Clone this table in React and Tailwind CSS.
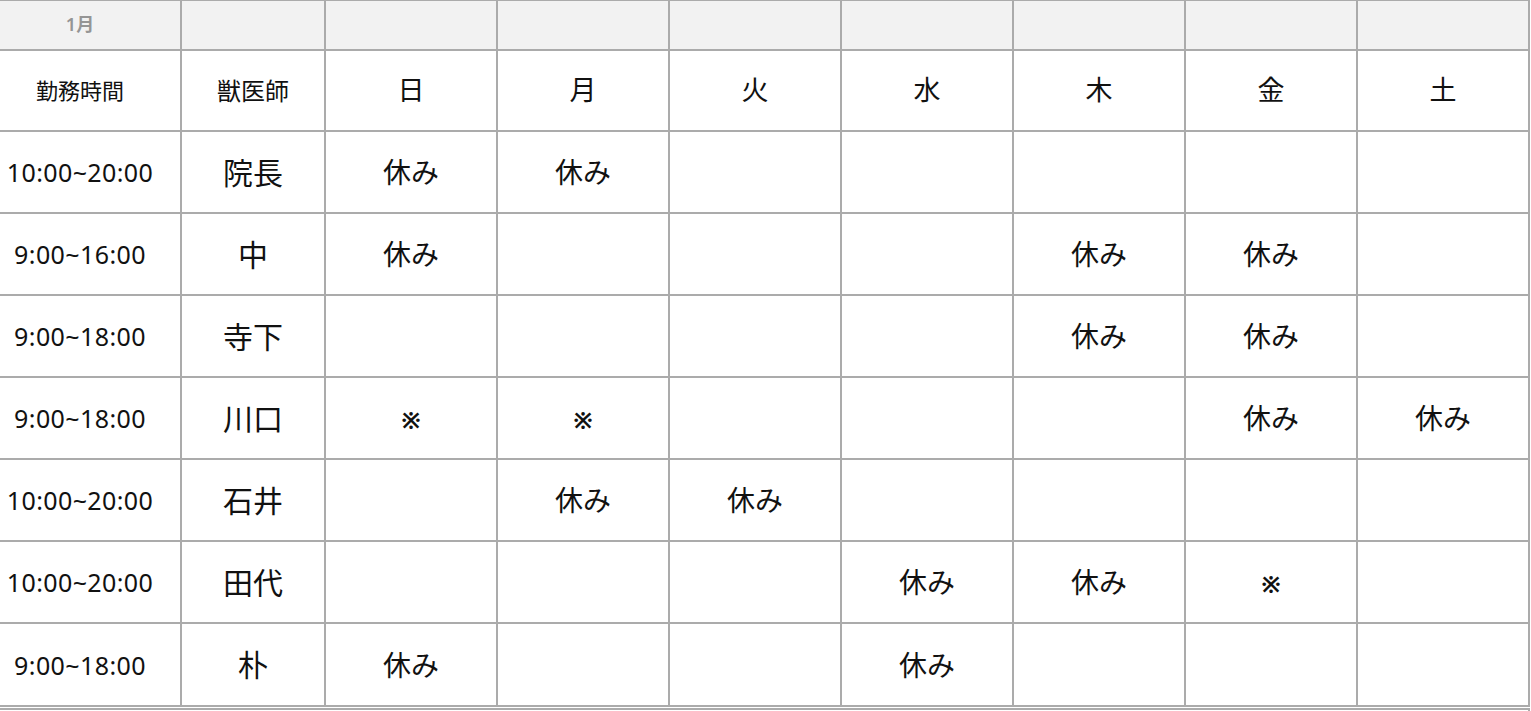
import React from 'react';

const days = ['日', '月', '火', '水', '木', '金', '土'];

// 勤務表: 各行 [勤務時間, 獣医師, 日..土]
const rows = [
    ['10:00~20:00', '院長', ['休み', '休み', '', '', '', '', '']],
    ['9:00~16:00', '中', ['休み', '', '', '', '休み', '休み', '']],
    ['9:00~18:00', '寺下', ['', '', '', '', '休み', '休み', '']],
    ['9:00~18:00', '川口', ['※', '※', '', '', '', '休み', '休み']],
    ['10:00~20:00', '石井', ['', '休み', '休み', '', '', '', '']],
    ['10:00~20:00', '田代', ['', '', '', '休み', '休み', '※', '']],
    ['9:00~18:00', '朴', ['休み', '', '', '休み', '', '', '']],
];

const font = { fontFamily: "'Noto Sans', 'Noto Sans CJK JP', sans-serif" };

const Cell = ({ children, className = '' }) => (
    <div className={`flex items-center justify-center bg-white text-[#111] ${className}`}>
        {children}
    </div>
);

const App = () => {
    return (
        <div className="w-[1531px] h-[711px] overflow-hidden bg-white" style={font}>
            <div className="w-[1530px] bg-[#ababab] pt-px pr-[2px] pb-[2px] grid gap-[2px] grid-cols-[180px_142px_repeat(7,170px)] grid-rows-[48px_79px_repeat(6,80px)_81px]">
                {/* Month header */}
                <div className="flex items-center justify-center bg-[#f2f2f2] text-[18px] font-semibold text-[#959595] pb-[2px] pr-[20px]">1月</div>
                {Array.from({ length: 8 }).map((_, i) => (
                    <div key={i} className="bg-[#f2f2f2]" />
                ))}

                {/* Column titles */}
                <Cell className="text-[22px] pr-[20px]">勤務時間</Cell>
                <Cell className="text-[24px]">獣医師</Cell>
                {days.map(d => (
                    <Cell key={d} className="text-[27px]">{d}</Cell>
                ))}

                {/* Shifts */}
                {rows.map(([time, name, marks], r) => (
                    <React.Fragment key={r}>
                        <Cell className="text-[25px] tracking-[0.4px] pt-[2px] pr-[20px]">{time}</Cell>
                        <Cell className="text-[30px]">{name}</Cell>
                        {marks.map((m, i) => (
                            <Cell key={i} className={m === '※' ? 'text-[23px] font-bold pt-[4px]' : 'text-[28px]'}>{m}</Cell>
                        ))}
                    </React.Fragment>
                ))}
            </div>
            <div className="w-[1530px] mt-px border-t-2 border-r-2 border-[#ababab] h-[10px]" />
        </div>
    );
};

export default App;
